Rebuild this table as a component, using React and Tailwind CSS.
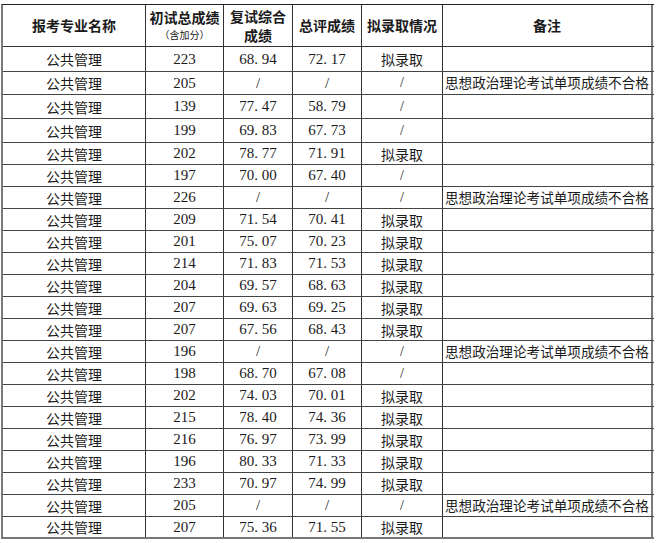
import React from 'react';

const rows = [
    ['223', '68.94', '72.17', '拟录取', ''],
    ['205', '/', '/', '/', '思想政治理论考试单项成绩不合格'],
    ['139', '77.47', '58.79', '/', ''],
    ['199', '69.83', '67.73', '/', ''],
    ['202', '78.77', '71.91', '拟录取', ''],
    ['197', '70.00', '67.40', '/', ''],
    ['226', '/', '/', '/', '思想政治理论考试单项成绩不合格'],
    ['209', '71.54', '70.41', '拟录取', ''],
    ['201', '75.07', '70.23', '拟录取', ''],
    ['214', '71.83', '71.53', '拟录取', ''],
    ['204', '69.57', '68.63', '拟录取', ''],
    ['207', '69.63', '69.25', '拟录取', ''],
    ['207', '67.56', '68.43', '拟录取', ''],
    ['196', '/', '/', '/', '思想政治理论考试单项成绩不合格'],
    ['198', '68.70', '67.08', '/', ''],
    ['202', '74.03', '70.01', '拟录取', ''],
    ['215', '78.40', '74.36', '拟录取', ''],
    ['216', '76.97', '73.99', '拟录取', ''],
    ['196', '80.33', '71.33', '拟录取', ''],
    ['233', '70.97', '74.99', '拟录取', ''],
    ['205', '/', '/', '/', '思想政治理论考试单项成绩不合格'],
    ['207', '75.36', '71.55', '拟录取', ''],
];

// first rows in the scan are a little taller
const rowHeights = ['h-[25px]', 'h-[23px]', 'h-[24px]', 'h-[24px]'];

const serif = { fontFamily: '"Liberation Serif", "Noto Sans CJK SC", serif' };
const cjk = { fontFamily: '"Noto Sans CJK SC", sans-serif' };

// SimSun style: the decimal point takes a full half-width cell
function Num({ value }) {
    if (value === '/') return <span style={serif}>/</span>;
    const [a, b] = value.split('.');
    if (b === undefined) return <span style={serif}>{a}</span>;
    return (
        <span style={serif}>
            {a}
            <span className="inline-block w-[0.5em] text-left">.</span>
            {b}
        </span>
    );
}

export default function App() {
    return (
        <div className="w-[658px] h-[543px] bg-white pt-[4px] pl-[1px] text-[#1a1a1a]">
            <div className="w-[653px] border-t border-[#222] border-l-2 border-l-[#7a7a7a]">
                {/* header */}
                <div className="flex h-[42px] border-b border-[#333] font-bold text-[14px] leading-[19px]" style={cjk}>
                    <div className="w-[143px] border-r border-[#333] flex items-center justify-center">报考专业名称</div>
                    <div className="w-[78px] border-r border-[#333] flex flex-col items-center justify-center">
                        <span>初试总成绩</span>
                        <span className="text-[10px] leading-[16px] font-normal">（含加分）</span>
                    </div>
                    <div className="w-[69px] border-r border-[#333] flex flex-col items-center justify-center">
                        <span>复试综合</span>
                        <span>成绩</span>
                    </div>
                    <div className="w-[69px] border-r border-[#333] flex items-center justify-center">总评成绩</div>
                    <div className="w-[81px] border-r border-[#333] flex items-center justify-center">拟录取情况</div>
                    <div className="w-[210px] border-r-2 border-r-[#7a7a7a] flex items-center justify-center">备注</div>
                </div>

                {rows.map((r, i) => (
                    <div
                        key={i}
                        className={`flex text-[14px] leading-none ${rowHeights[i] || 'h-[22px]'} border-b ${i === rows.length - 1 ? 'border-b-2 border-[#777]' : 'border-[#444]'}`}
                    >
                        <div className="w-[143px] border-r border-[#333] flex items-center justify-center" style={cjk}>公共管理</div>
                        <div className="w-[78px] border-r border-[#333] flex items-center justify-center text-[15px]"><Num value={r[0]} /></div>
                        <div className="w-[69px] border-r border-[#333] flex items-center justify-center text-[15px]"><Num value={r[1]} /></div>
                        <div className="w-[69px] border-r border-[#333] flex items-center justify-center text-[15px]"><Num value={r[2]} /></div>
                        <div className="w-[81px] border-r border-[#333] flex items-center justify-center" style={r[3] === '/' ? serif : cjk}>
                            {r[3]}
                        </div>
                        <div className="w-[210px] border-r-2 border-r-[#7a7a7a] flex items-center pl-[2px] overflow-hidden whitespace-nowrap text-[13.6px]" style={cjk}>
                            {r[4]}
                        </div>
                    </div>
                ))}
            </div>
        </div>
    );
}
